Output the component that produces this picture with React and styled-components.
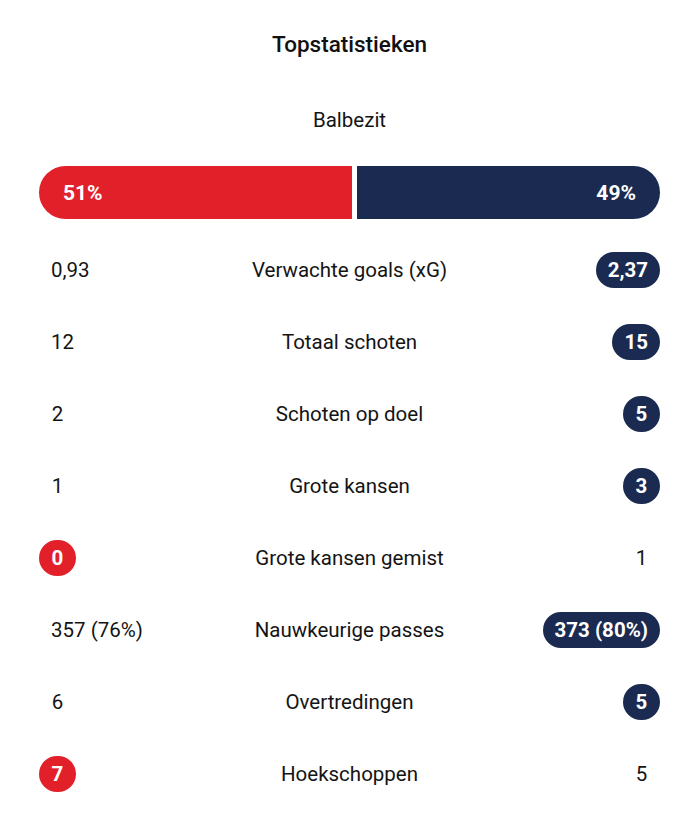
import React from 'react';
import styled, { createGlobalStyle } from 'styled-components';

const RED = '#e2202a';
const NAVY = '#1a2a50';

const GlobalStyle = createGlobalStyle`
  body {
    margin: 0;
    background: #fff;
    font-family: Roboto, "Liberation Sans", sans-serif;
    color: #141414;
  }
`;

const StatsPanel = styled.div`
  width: 621px;
  margin: 0 0 0 39px;
  padding-top: 30px;
`;

const Title = styled.h2`
  margin: 0;
  height: 28px;
  line-height: 28px;
  text-align: center;
  font-size: 22.5px;
  font-weight: 500;
  color: #111;
`;

const SectionLabel = styled.div`
  margin-top: 50px;
  height: 24px;
  line-height: 24px;
  text-align: center;
  font-size: 20.5px;
`;

const PossessionBar = styled.div`
  display: flex;
  gap: 5px;
  height: 53px;
  margin-top: 34px;
  margin-bottom: 15px;
`;

const PossessionPart = styled.div`
  display: flex;
  align-items: center;
  justify-content: ${p => (p.side === 'home' ? 'flex-start' : 'flex-end')};
  padding: 0 24px;
  background: ${p => (p.side === 'home' ? RED : NAVY)};
  color: #fff;
  font-size: 21px;
  font-weight: 700;
  border-radius: ${p => (p.side === 'home' ? '27px 0 0 27px' : '0 27px 27px 0')};
`;

const StatRow = styled.div`
  display: grid;
  grid-template-columns: 1fr auto 1fr;
  align-items: center;
  height: 72px;
`;

const StatName = styled.div`
  text-align: center;
  font-size: 20.5px;
`;

const Cell = styled.div`
  display: flex;
  justify-content: ${p => (p.side === 'home' ? 'flex-start' : 'flex-end')};
`;

const Value = styled.span`
  display: inline-flex;
  align-items: center;
  justify-content: center;
  height: 36px;
  min-width: 37px;
  box-sizing: border-box;
  padding: 0 12px;
  border-radius: 18px;
  font-size: 20.5px;
  font-weight: ${p => (p.highlight ? 700 : 400)};
  color: ${p => (p.highlight ? '#fff' : '#141414')};
  background: ${p =>
    !p.highlight ? 'transparent' : p.side === 'home' ? RED : NAVY};
`;

const stats = [
  { name: 'Verwachte goals (xG)', home: '0,93', away: '2,37', win: 'away' },
  { name: 'Totaal schoten', home: '12', away: '15', win: 'away' },
  { name: 'Schoten op doel', home: '2', away: '5', win: 'away' },
  { name: 'Grote kansen', home: '1', away: '3', win: 'away' },
  { name: 'Grote kansen gemist', home: '0', away: '1', win: 'home' },
  { name: 'Nauwkeurige passes', home: '357 (76%)', away: '373 (80%)', win: 'away' },
  { name: 'Overtredingen', home: '6', away: '5', win: 'away' },
  { name: 'Hoekschoppen', home: '7', away: '5', win: 'home' },
];

const possession = { home: 51, away: 49 };

export default function App() {
  return (
    <>
      <GlobalStyle />
      <StatsPanel>
        <Title>Topstatistieken</Title>
        <SectionLabel>Balbezit</SectionLabel>
        <PossessionBar>
          <PossessionPart side="home" style={{ flex: possession.home }}>
            {possession.home}%
          </PossessionPart>
          <PossessionPart side="away" style={{ flex: possession.away }}>
            {possession.away}%
          </PossessionPart>
        </PossessionBar>
        {stats.map(s => (
          <StatRow key={s.name}>
            <Cell side="home">
              <Value side="home" highlight={s.win === 'home'}>{s.home}</Value>
            </Cell>
            <StatName>{s.name}</StatName>
            <Cell side="away">
              <Value side="away" highlight={s.win === 'away'}>{s.away}</Value>
            </Cell>
          </StatRow>
        ))}
      </StatsPanel>
    </>
  );
}
